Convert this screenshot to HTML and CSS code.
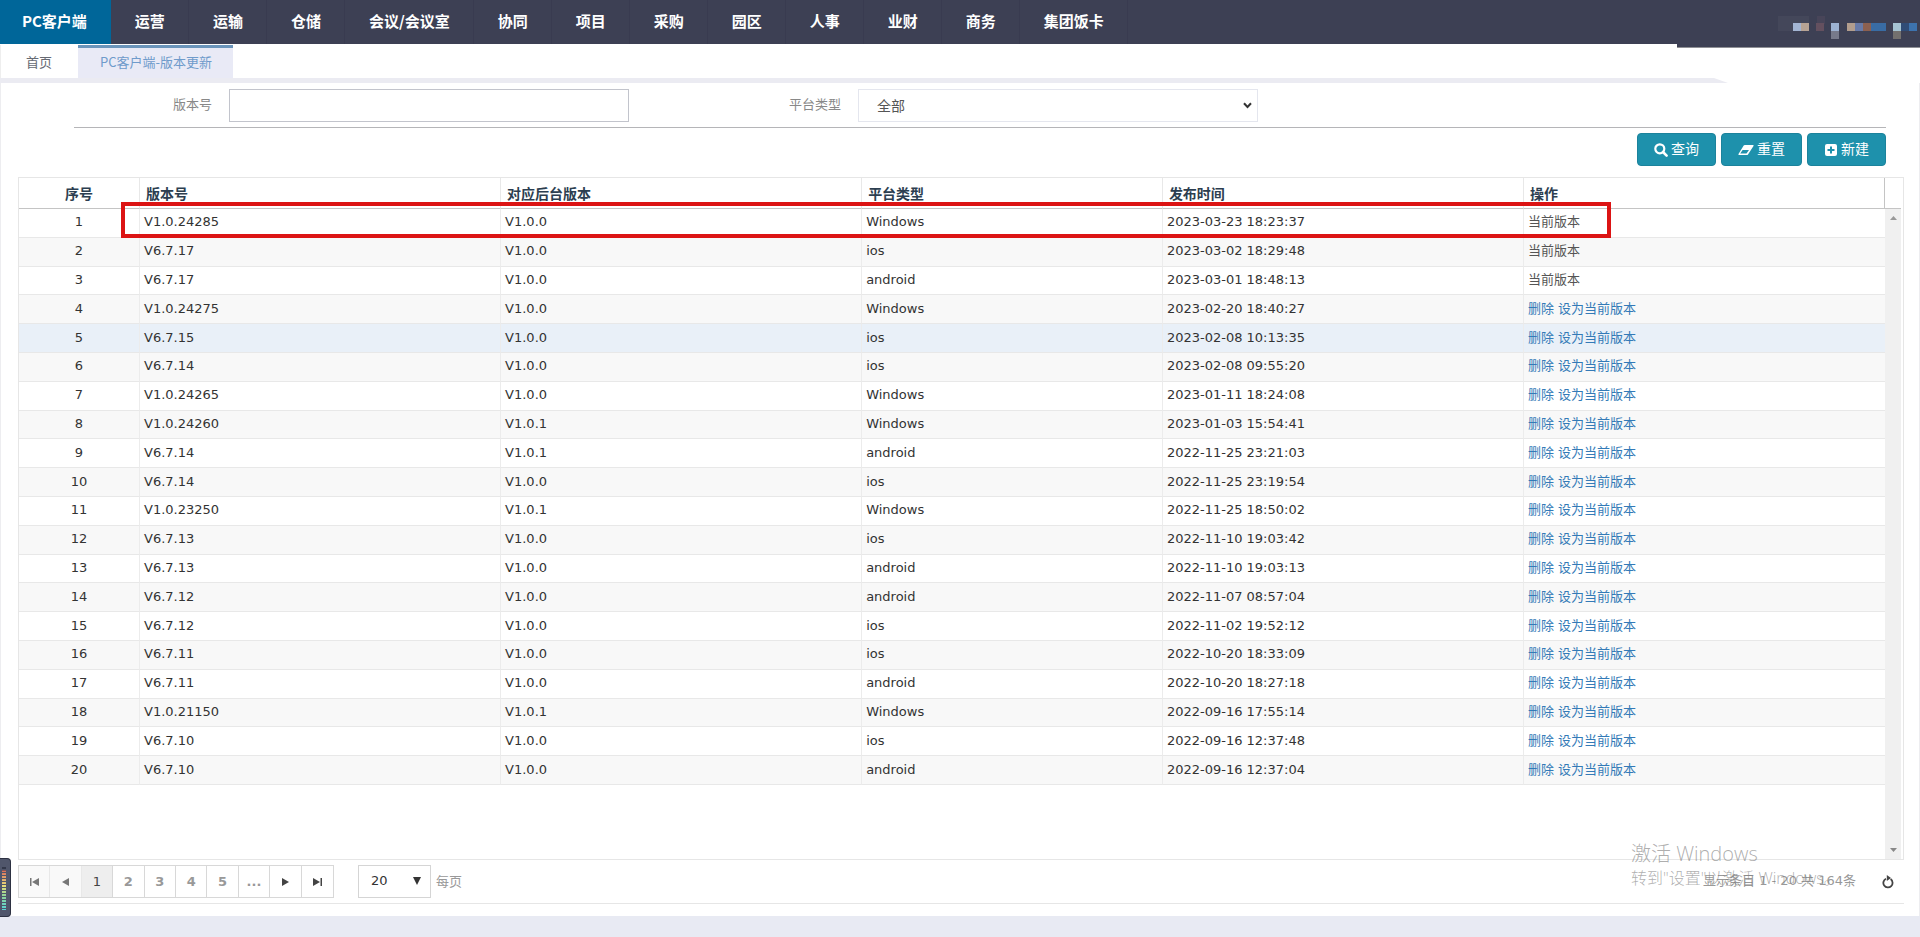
FILE: index.html
```html
<!DOCTYPE html>
<html lang="zh-CN">
<head>
<meta charset="utf-8">
<title>PC客户端-版本更新</title>
<link rel="stylesheet" href="styles.css">
</head>
<body>
<header class="topbar">
  <nav class="menu">
    <a class="menu-item active" href="#">PC客户端</a>
    <a class="menu-item" href="#">运营</a>
    <a class="menu-item" href="#">运输</a>
    <a class="menu-item" href="#">仓储</a>
    <a class="menu-item" href="#">会议/会议室</a>
    <a class="menu-item" href="#">协同</a>
    <a class="menu-item" href="#">项目</a>
    <a class="menu-item" href="#">采购</a>
    <a class="menu-item" href="#">园区</a>
    <a class="menu-item" href="#">人事</a>
    <a class="menu-item" href="#">业财</a>
    <a class="menu-item" href="#">商务</a>
    <a class="menu-item" href="#">集团饭卡</a>
  </nav>
  <svg class="user-mosaic" width="142" height="26" viewBox="0 0 142 26" aria-hidden="true">
    <rect x="0" y="0" width="31" height="15" fill="#44475a"/>
    <rect x="39" y="0" width="8" height="8" fill="#484559"/>
    <rect x="15" y="7" width="8" height="8" fill="#a3b5d3"/>
    <rect x="23" y="7" width="8" height="8" fill="#b7a394"/>
    <rect x="38" y="7" width="8" height="8" fill="#64505f"/>
    <rect x="53" y="7" width="8" height="8" fill="#9db3d3"/>
    <rect x="53" y="15" width="8" height="8" fill="#777a8b"/>
    <rect x="69" y="7" width="8" height="8" fill="#b29d8d"/>
    <rect x="77" y="7" width="8" height="8" fill="#687aa8"/>
    <rect x="85" y="7" width="8" height="8" fill="#8c6050"/>
    <rect x="93" y="7" width="15" height="8" fill="#396ca4"/>
    <rect x="115" y="7" width="8" height="8" fill="#a6c4d3"/>
    <rect x="115" y="15" width="8" height="8" fill="#73706e"/>
    <rect x="123" y="7" width="8" height="8" fill="#304c76"/>
    <rect x="131" y="7" width="8" height="8" fill="#3d73ae"/>
  </svg>
</header>
<div class="tabs">
  <a class="tab" href="#">首页</a>
  <a class="tab current" href="#">PC客户端-版本更新</a>
</div>
<div class="tabs-line"></div>
<main class="panel">
  <form class="search">
    <div class="fields">
      <div class="field">
        <label for="version">版本号</label>
        <input id="version" type="text">
      </div>
      <div class="field">
        <label for="platform">平台类型</label>
        <span class="select-wrap">
          <select id="platform"><option>全部</option></select>
          <svg width="9" height="7" viewBox="0 0 9 7"><path d="M1 1.200 4.500 5 8 1.200" fill="none" stroke="#333" stroke-width="2"/></svg>
        </span>
      </div>
    </div>
    <div class="actions">
      <button type="button"><svg width="14" height="14" viewBox="0 0 14 14"><circle cx="5.800" cy="5.800" r="4.500" fill="none" stroke="#fff" stroke-width="2.200"/><path d="M9 9l3.600 3.600" stroke="#fff" stroke-width="2.600" stroke-linecap="round"/></svg><span>查询</span></button>
      <button type="button"><svg width="16" height="14" viewBox="0 0 16 14"><path d="M6.800 2H15q1 .1.500 1.100L10 11.400q-.4.600-1.200.6H1q-1-.1-.5-1.100L5.700 2.600Q6.100 2 6.800 2zM2.200 10.600h6.300l2.500-3.500H4.600z" fill="#fff" fill-rule="evenodd"/></svg><span>重置</span></button>
      <button type="button"><svg width="14" height="14" viewBox="0 0 14 14"><rect x="1" y="1" width="12" height="12" rx="2" fill="#fff"/><path d="M7 3.500v7M3.500 7h7" stroke="#1e91ac" stroke-width="2"/></svg><span>新建</span></button>
    </div>
  </form>
  <section class="grid">
    <div class="grid-main">
      <table class="versions">
        <colgroup><col class="c-no"><col class="c-wide"><col class="c-wide"><col class="c-type"><col class="c-wide"><col class="c-wide"></colgroup>
        <thead><tr><th>序号</th><th>版本号</th><th>对应后台版本</th><th>平台类型</th><th>发布时间</th><th>操作</th></tr></thead>
        <tbody>
          <tr><td>1</td><td>V1.0.24285</td><td>V1.0.0</td><td>Windows</td><td>2023-03-23 18:23:37</td><td>当前版本</td></tr>
          <tr><td>2</td><td>V6.7.17</td><td>V1.0.0</td><td>ios</td><td>2023-03-02 18:29:48</td><td>当前版本</td></tr>
          <tr><td>3</td><td>V6.7.17</td><td>V1.0.0</td><td>android</td><td>2023-03-01 18:48:13</td><td>当前版本</td></tr>
          <tr><td>4</td><td>V1.0.24275</td><td>V1.0.0</td><td>Windows</td><td>2023-02-20 18:40:27</td><td><a href="#">删除</a> <a href="#">设为当前版本</a></td></tr>
          <tr class="hover"><td>5</td><td>V6.7.15</td><td>V1.0.0</td><td>ios</td><td>2023-02-08 10:13:35</td><td><a href="#">删除</a> <a href="#">设为当前版本</a></td></tr>
          <tr><td>6</td><td>V6.7.14</td><td>V1.0.0</td><td>ios</td><td>2023-02-08 09:55:20</td><td><a href="#">删除</a> <a href="#">设为当前版本</a></td></tr>
          <tr><td>7</td><td>V1.0.24265</td><td>V1.0.0</td><td>Windows</td><td>2023-01-11 18:24:08</td><td><a href="#">删除</a> <a href="#">设为当前版本</a></td></tr>
          <tr><td>8</td><td>V1.0.24260</td><td>V1.0.1</td><td>Windows</td><td>2023-01-03 15:54:41</td><td><a href="#">删除</a> <a href="#">设为当前版本</a></td></tr>
          <tr><td>9</td><td>V6.7.14</td><td>V1.0.1</td><td>android</td><td>2022-11-25 23:21:03</td><td><a href="#">删除</a> <a href="#">设为当前版本</a></td></tr>
          <tr><td>10</td><td>V6.7.14</td><td>V1.0.0</td><td>ios</td><td>2022-11-25 23:19:54</td><td><a href="#">删除</a> <a href="#">设为当前版本</a></td></tr>
          <tr><td>11</td><td>V1.0.23250</td><td>V1.0.1</td><td>Windows</td><td>2022-11-25 18:50:02</td><td><a href="#">删除</a> <a href="#">设为当前版本</a></td></tr>
          <tr><td>12</td><td>V6.7.13</td><td>V1.0.0</td><td>ios</td><td>2022-11-10 19:03:42</td><td><a href="#">删除</a> <a href="#">设为当前版本</a></td></tr>
          <tr><td>13</td><td>V6.7.13</td><td>V1.0.0</td><td>android</td><td>2022-11-10 19:03:13</td><td><a href="#">删除</a> <a href="#">设为当前版本</a></td></tr>
          <tr><td>14</td><td>V6.7.12</td><td>V1.0.0</td><td>android</td><td>2022-11-07 08:57:04</td><td><a href="#">删除</a> <a href="#">设为当前版本</a></td></tr>
          <tr><td>15</td><td>V6.7.12</td><td>V1.0.0</td><td>ios</td><td>2022-11-02 19:52:12</td><td><a href="#">删除</a> <a href="#">设为当前版本</a></td></tr>
          <tr><td>16</td><td>V6.7.11</td><td>V1.0.0</td><td>ios</td><td>2022-10-20 18:33:09</td><td><a href="#">删除</a> <a href="#">设为当前版本</a></td></tr>
          <tr><td>17</td><td>V6.7.11</td><td>V1.0.0</td><td>android</td><td>2022-10-20 18:27:18</td><td><a href="#">删除</a> <a href="#">设为当前版本</a></td></tr>
          <tr><td>18</td><td>V1.0.21150</td><td>V1.0.1</td><td>Windows</td><td>2022-09-16 17:55:14</td><td><a href="#">删除</a> <a href="#">设为当前版本</a></td></tr>
          <tr><td>19</td><td>V6.7.10</td><td>V1.0.0</td><td>ios</td><td>2022-09-16 12:37:48</td><td><a href="#">删除</a> <a href="#">设为当前版本</a></td></tr>
          <tr><td>20</td><td>V6.7.10</td><td>V1.0.0</td><td>android</td><td>2022-09-16 12:37:04</td><td><a href="#">删除</a> <a href="#">设为当前版本</a></td></tr>
        </tbody>
      </table>
    </div>
    <div class="grid-side">
      <div class="scrollbar">
        <svg width="7" height="4" viewBox="0 0 7 4"><path d="M0 4 3.500 0 7 4z" fill="#999"/></svg>
        <svg width="7" height="4" viewBox="0 0 7 4"><path d="M0 0h7L3.500 4z" fill="#888"/></svg>
      </div>
    </div>
    <div class="highlight"></div>
  </section>
  <footer class="pager">
    <div class="pages">
      <button type="button" class="off" aria-label="首页"><svg width="9" height="8" viewBox="0 0 9 8"><path d="M0 0h1.500v8H0zM9 0v8L2 4z" fill="#777"/></svg></button>
      <button type="button" class="off" aria-label="上一页"><svg width="7" height="8" viewBox="0 0 7 8"><path d="M7 0v8L0 4z" fill="#777"/></svg></button>
      <button type="button" class="on">1</button>
      <button type="button">2</button>
      <button type="button">3</button>
      <button type="button">4</button>
      <button type="button">5</button>
      <button type="button">...</button>
      <button type="button" aria-label="下一页"><svg width="7" height="8" viewBox="0 0 7 8"><path d="M0 0v8l7-4z" fill="#444"/></svg></button>
      <button type="button" aria-label="末页"><svg width="9" height="8" viewBox="0 0 9 8"><path d="M9 0H7.500v8H9zM0 0v8l7-4z" fill="#444"/></svg></button>
    </div>
    <span class="size-wrap">
      <select id="size"><option>20</option></select>
      <svg width="8" height="8" viewBox="0 0 8 8"><path d="M0 0h8L4 8z" fill="#333"/></svg>
    </span>
    <label class="per-page" for="size">每页</label>
    <span class="status">显示条目 1 - 20 共 164条</span>
    <button type="button" class="refresh" aria-label="刷新"><svg width="12" height="14" viewBox="0 0 12 14"><path d="M8.600 4.100A4.600 4.600 0 1 1 4 3.700" fill="none" stroke="#444" stroke-width="1.800"/><path d="M4.800 0v6L9 3z" fill="#444"/></svg></button>
  </footer>
</main>
<div class="watermark">
  <p class="wm-title">激活 Windows</p>
  <p class="wm-text">转到"设置"以激活 Windows。</p>
</div>
<div class="meter"><div class="meter-bars"></div></div>
</body>
</html>
```
FILE: styles.css
```css
* { box-sizing: border-box; }

body {
  margin: 0;
  min-height: 100vh;
  display: flex;
  flex-direction: column;
  position: relative;
  padding-bottom: 21px;
  background: #e8eaf3;
  color: #333;
  font: 13px/20px "Noto Sans CJK SC", sans-serif;
}

a { color: #337ab7; text-decoration: none; }
button, input, select { font: inherit; color: inherit; margin: 0; }
svg { display: block; flex: none; }

.topbar {
  position: relative;
  display: flex;
  justify-content: space-between;
  height: 44px;
  background: #3d4054;
}
.topbar::after {
  content: "";
  position: absolute;
  right: 0;
  top: 44px;
  width: 243px;
  height: 3px;
  background: #3d4054;
  border-bottom: 1px solid #8f9095;
}
.menu { display: flex; }
.menu-item {
  display: flex;
  align-items: center;
  padding: 0 23px 3px 24px;
  border-right: 1px solid #393b50;
  color: #fff;
  font-size: 15px;
  font-weight: 700;
}
.menu-item.active { padding-left: 22px; background: #006699; border-color: #006699; }
.user-mosaic { margin-top: 16px; }

.tabs { display: flex; height: 34px; padding-top: 1px; background: #fff; }
.tab {
  padding: 7px 26px 0 25px;
  border-left: 1px solid #eee;
  color: #666a73;
}
.tab.current {
  padding: 4px 21px 0 22px;
  border-left: 0;
  border-top: 3px solid #6b95bb;
  background: #e9eaf6;
  color: #6f9bcb;
}
.tabs-line { background: #fff; height: 5px; }
.tabs-line::before {
  content: "";
  display: block;
  height: 5px;
  width: 90%;
  background: #ebebf2;
  clip-path: polygon(0 0, calc(100% - 14px) 0, 100% 100%, 0 100%);
}

.panel {
  flex: 1;
  display: flex;
  flex-direction: column;
  padding: 0 15px 12px 17px;
  background: #fff;
  border: 1px solid #ededf0;
  border-width: 0 1px;
}

.fields {
  display: grid;
  grid-template-columns: 555px 1fr;
  margin: 0 18px 0 56px;
  padding: 6px 0 5px;
  border-bottom: 1px solid #b5b5b8;
}
.field { display: flex; align-items: center; padding-left: 99px; color: #888; }
.field + .field { padding-left: 160px; }
.field label { margin-right: 17px; padding-bottom: 3px; }
.field input, .select-wrap { width: 400px; height: 33px; }
.field input { border: 1px solid #c2c4cc; background: #fff; padding: 0 12px; }
.select-wrap, .size-wrap { position: relative; display: block; }
.select-wrap select, .size-wrap select {
  appearance: none;
  width: 100%;
  height: 100%;
  background: #fff;
  border-radius: 0;
}
.select-wrap select { border: 1px solid #e4e6ee; padding: 0 18px 2px; font-size: 14px; color: #555; }
.select-wrap svg { position: absolute; right: 6px; top: 13px; pointer-events: none; }

.actions {
  display: flex;
  justify-content: flex-end;
  gap: 5px;
  margin: 5px 18px 11px 0;
}
.actions button {
  display: flex;
  align-items: center;
  justify-content: center;
  gap: 3px;
  height: 33px;
  padding: 0 16px;
  border: 1px solid #1c839c;
  border-radius: 4px;
  background: #1e91ac;
  color: #fff;
  font-size: 14px;
}
.actions span { padding-bottom: 3px; }

.grid {
  position: relative;
  flex: 1;
  display: flex;
  border: 1px solid #e6e6e6;
}
.grid-main { flex: 1; }
.grid-side { width: 18px; padding: 30px 2px 0 0; display: flex; }
.scrollbar {
  flex: 1;
  display: flex;
  flex-direction: column;
  align-items: center;
  justify-content: space-between;
  padding: 7px 0;
  border-top: 1px solid #c4c4c4;
  background: #f0f0f0;
}
.versions {
  width: 100%;
  height: 607px;
  table-layout: fixed;
  border-collapse: separate;
  border-spacing: 0;
  font-family: "DejaVu Sans", "Noto Sans CJK SC", sans-serif;
}
.c-no { width: 121px; }
.c-wide { width: 19.35%; }
.versions th {
  height: 31px;
  padding: 0 6px;
  border-right: 1px solid #e8e8e8;
  border-bottom: 1px solid #c4c4c4;
  color: #2c3e50;
  font: 700 14px/20px "Noto Sans CJK SC", sans-serif;
  text-align: left;
}
.versions th:last-child { border-right-color: #c4c4c4; }
.versions td {
  padding: 3px 4px 4px;
  border-right: 1px solid #ececec;
  border-bottom: 1px solid #e8e8e8;
  white-space: nowrap;
}
.versions td:last-child { border-right: 0; color: #555; }
.versions th:first-child, .versions td:first-child { text-align: center; }
.versions tbody tr:nth-child(even) { background: #f8f8f8; }
.versions tbody tr.hover { background: #e9f0f8; }

.highlight {
  position: absolute;
  left: 102px;
  right: 292px;
  top: 24px;
  height: 36px;
  border: 4px solid #dc1414;
}

.pager {
  display: flex;
  align-items: center;
  height: 44px;
  border-bottom: 1px solid #e6e6e6;
  color: #999;
}
.pages {
  display: grid;
  grid-template-columns: repeat(10, 1fr);
  width: 316px;
  height: 33px;
  border: 1px solid #d8d8d8;
  font-family: "DejaVu Sans", sans-serif;
}
.pages button {
  display: flex;
  align-items: center;
  justify-content: center;
  padding: 0;
  border: 0;
  border-right: 1px solid #d8d8d8;
  background: #fff;
  color: #999;
  font-weight: 700;
}
.pages button:last-child { border-right: 0; }
.pages .off { background: #f9f9f9; border-color: #e8e8e8; }
.pages .on { background: #eee; color: #444; font-weight: 400; }
.size-wrap { width: 73px; height: 33px; margin-left: 24px; }
.size-wrap select {
  border: 1px solid #d5d5d5;
  padding: 0 12px 2px;
  color: #333;
  font-family: "DejaVu Sans", sans-serif;
}
.size-wrap svg { position: absolute; right: 10px; top: 12px; pointer-events: none; }
.per-page { margin-left: 5px; padding-bottom: 2px; }
.status { margin-left: auto; padding-bottom: 2px; font-family: "DejaVu Sans", "Noto Sans CJK SC", sans-serif; }
.refresh { margin: 0 10px 0 26px; padding: 0; border: 0; background: none; }

.watermark {
  position: absolute;
  right: 88px;
  bottom: 47px;
  width: 201px;
  color: rgba(120, 120, 120, .6);
  font-family: "Open Sans", "Noto Sans CJK SC", sans-serif;
  font-weight: 300;
  white-space: nowrap;
  pointer-events: none;
}
.watermark p { margin: 0; }
.wm-title { font-size: 20px; line-height: 24px; }
.wm-text { font-size: 16px; line-height: 24px; }

.meter {
  position: absolute;
  left: 0;
  bottom: 20px;
  width: 11px;
  height: 59px;
  padding: 7px 4px 6px 2px;
  border: 1px solid #2d3142;
  border-left: 0;
  border-radius: 0 4px 4px 0;
  background: #50566b;
}
.meter-bars {
  height: 44px;
  background:
    repeating-linear-gradient(#50566b 0 1px, transparent 1px 3px),
    linear-gradient(#33384a 0 4px, #d9705c 5px, #e8dc7a 20px, #8fd69a 30px, #58d3d6 44px);
}
```
